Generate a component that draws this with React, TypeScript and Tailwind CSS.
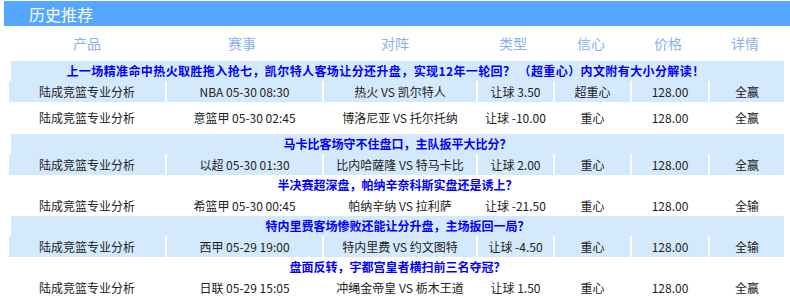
const font = { fontFamily: '"Noto Sans CJK SC", "Noto Sans", sans-serif' }

interface Pick {
  title: string
  league: string
  match: string
  handicap: string
  confidence: string
  result: string
}

const picks: Pick[] = [
  {
    title: '上一场精准命中热火取胜拖入抢七，凯尔特人客场让分还升盘，实现12年一轮回？ （超重心）内文附有大小分解读！',
    league: 'NBA 05-30 08:30',
    match: '热火 VS 凯尔特人',
    handicap: '让球 3.50',
    confidence: '超重心',
    result: '全赢',
  },
  {
    title: '',
    league: '意篮甲 05-30 02:45',
    match: '博洛尼亚 VS 托尔托纳',
    handicap: '让球 -10.00',
    confidence: '重心',
    result: '全赢',
  },
  {
    title: '马卡比客场守不住盘口，主队扳平大比分？',
    league: '以超 05-30 01:30',
    match: '比内哈薩隆 VS 特马卡比',
    handicap: '让球 2.00',
    confidence: '重心',
    result: '全赢',
  },
  {
    title: '半决赛超深盘，帕纳辛奈科斯实盘还是诱上？',
    league: '希篮甲 05-30 00:45',
    match: '帕纳辛纳 VS 拉利萨',
    handicap: '让球 -21.50',
    confidence: '重心',
    result: '全输',
  },
  {
    title: '特内里费客场惨败还能让分升盘，主场扳回一局？',
    league: '西甲 05-29 19:00',
    match: '特内里费 VS 约文图特',
    handicap: '让球 -4.50',
    confidence: '重心',
    result: '全输',
  },
  {
    title: '盘面反转，宇都宫皇者横扫前三名夺冠？',
    league: '日联 05-29 15:05',
    match: '冲绳金帝皇 VS 栃木王道',
    handicap: '让球 1.50',
    confidence: '重心',
    result: '全赢',
  },
]

const headers = ['产品', '赛事', '对阵', '类型', '信心', '价格', '详情']

export default function App() {
  return (
    <div className="w-[790px] h-[300px] overflow-hidden bg-white" style={font}>
      {/* 标题栏 */}
      <div className="mt-[1px] ml-[4px] h-[25px] bg-[#55a6ff] flex items-center pl-[25px] text-white text-[16px]">
        历史推荐
      </div>

      {/* 表头 */}
      <div className="ml-[9px] h-[35px] grid grid-cols-[156px_154px_152px_84px_72px_82px_72px] items-center text-[14px] text-[#88b4ea]">
        {headers.map((h) => (
          <div key={h} className="text-center">
            {h}
          </div>
        ))}
      </div>

      {/* 列表 */}
      <div className="ml-[9px] w-[775px] text-[12px] text-[#222]">
        {picks.map((p, i) => {
          const shaded = i % 2 === 0
          const cell = shaded ? 'bg-[#d5e9fc]' : ''
          return (
            <div key={i} className={p.title ? '' : 'h-[32px] flex flex-col justify-center'}>
              {p.title && (
                <div
                  className={`h-[20px] ml-[2px] flex items-center justify-center font-bold text-[#0000ff] ${cell} ${
                    i === 0 ? 'pr-[24px] tracking-[0.4px]' : ''
                  }`}
                >
                  {p.title}
                </div>
              )}
              <div className="h-[21px] grid grid-cols-[156px_155px_152px_75px_75px_76px_74px] gap-x-[2px]">
                <div className={`flex items-center justify-center ${cell}`}>陆成竞篮专业分析</div>
                <div className={`flex items-center justify-center ${cell}`}>{p.league}</div>
                <div className={`flex items-center justify-center ${cell}`}>{p.match}</div>
                <div className={`flex items-center justify-center ${cell}`}>{p.handicap}</div>
                <div className={`flex items-center justify-center ${cell}`}>{p.confidence}</div>
                <div className={`flex items-center justify-center ${cell}`}>128.00</div>
                <div className={`flex items-center justify-center ${cell}`}>{p.result}</div>
              </div>
            </div>
          )
        })}
      </div>
    </div>
  )
}
